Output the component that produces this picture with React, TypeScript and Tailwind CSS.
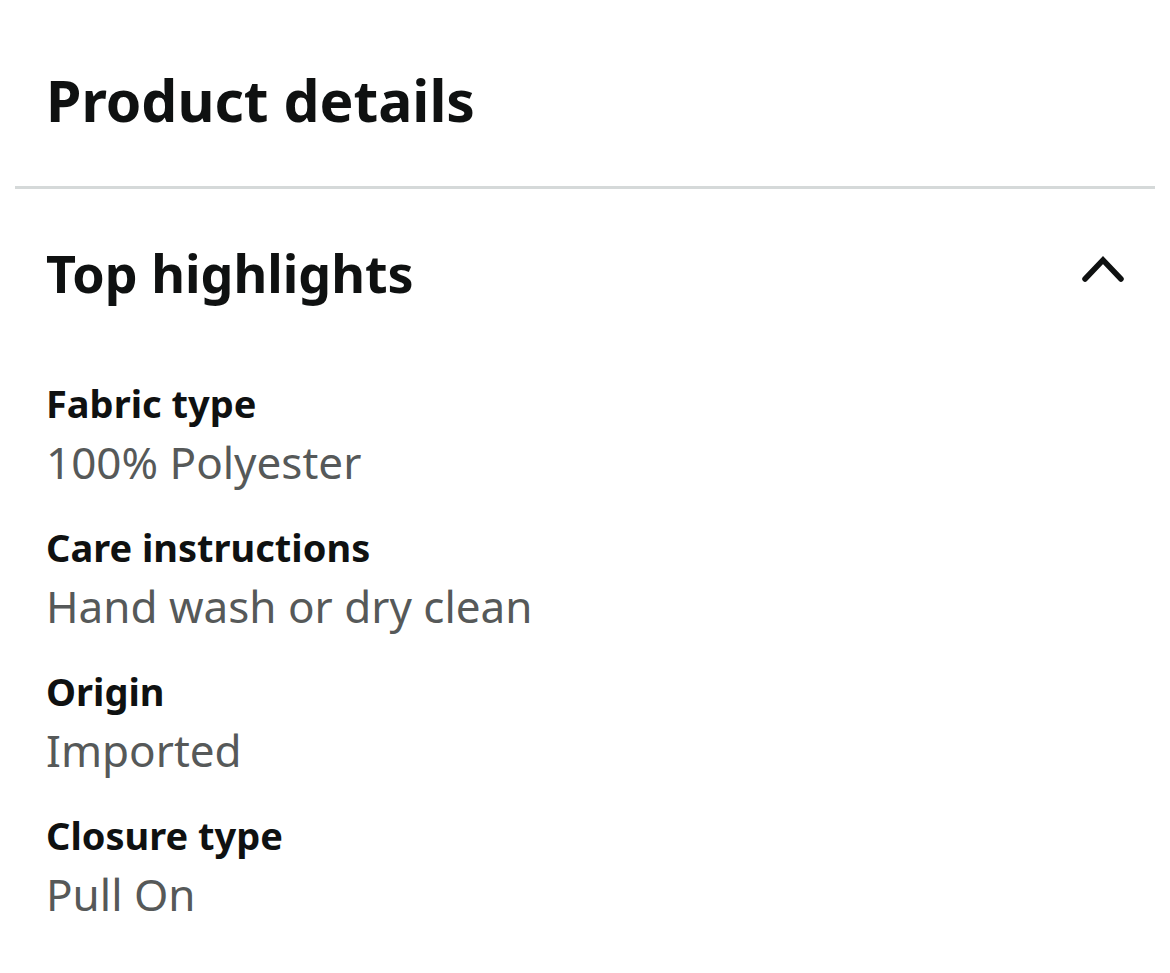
const HIGHLIGHTS = [
  { label: 'Fabric type', value: '100% Polyester' },
  { label: 'Care instructions', value: 'Hand wash or dry clean' },
  { label: 'Origin', value: 'Imported' },
  { label: 'Closure type', value: 'Pull On' },
];

export default function App() {
  return (
    <div className="min-h-[973px] w-full bg-white px-[15px] font-['Noto_Sans',sans-serif] text-[#0f1111]">
      <div className="pt-[64px] pl-[31px] pb-[50px]">
        <h1 className="text-[57px] font-bold leading-[72px]">Product details</h1>
      </div>
      <div className="h-[3px] bg-[#d5d9d9]" />

      <section className="pl-[31px] pr-[30px] pt-[52px]">
        <div className="flex items-center justify-between">
          <h2 className="text-[52px] font-bold leading-[64px]">Top highlights</h2>
          <svg viewBox="0 0 44 30" className="w-[44px] h-[30px] mb-[6px]" fill="none">
            <polyline
              points="4,24 22,5 40,24"
              stroke="#0f1111"
              strokeWidth="5.5"
              strokeLinecap="round"
              strokeLinejoin="miter"
            />
          </svg>
        </div>

        <dl className="mt-[74px] flex flex-col gap-[37px]">
          {HIGHLIGHTS.map((item) => (
            <div key={item.label} className="flex flex-col gap-[11px]">
              <dt className="text-[38px] font-bold leading-[48px]">{item.label}</dt>
              <dd className="text-[44px] leading-[48px] text-[#565959]">{item.value}</dd>
            </div>
          ))}
        </dl>
      </section>
    </div>
  );
}
